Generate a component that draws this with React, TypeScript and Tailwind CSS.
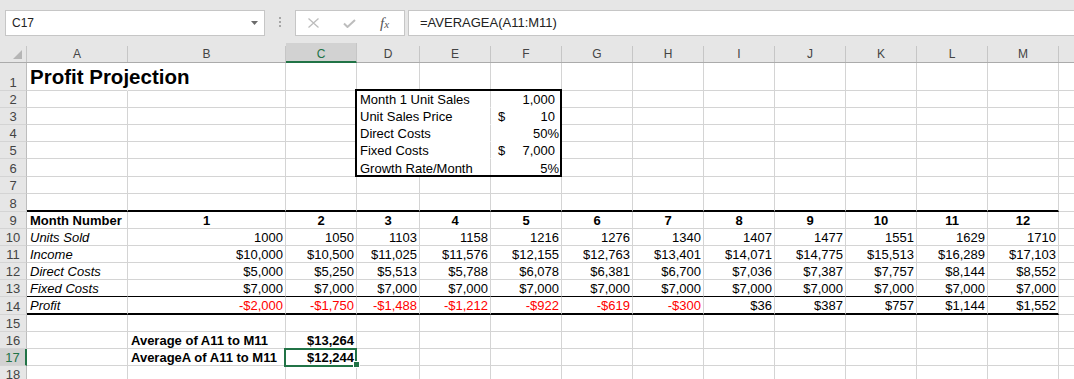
import React from "react";

type Bot = "n" | "w" | "k1" | "k2";
type Cell = {
  t?: React.ReactNode;
  a?: "l" | "r" | "c" | "rr" | "acc";
  s?: string;
  z?: string;
  bb?: Bot;
  br?: "n" | "w";
};
type Row = { n: number; h: string; cells: Cell[] };

const LETTERS = "ABCDEFGHIJKLMN".split("");
const WIDTHS = [
  "w-[101px]",
  "w-[158px]",
  "w-[71px]",
  "w-[63px]",
  "w-[71px]",
  "w-[71px]",
  "w-[71px]",
  "w-[71px]",
  "w-[71px]",
  "w-[71px]",
  "w-[71px]",
  "w-[71px]",
  "w-[71px]",
  "w-[71px]",
];

const BOT: Record<Bot, string> = {
  n: "border-b border-b-[#d4d4d4]",
  w: "border-b border-b-white",
  k1: "border-b border-b-black",
  k2: "border-b-2 border-b-black",
};
const RIGHT = {
  n: "border-r border-r-[#d4d4d4]",
  w: "border-r border-r-white",
};
const ALIGN = {
  l: "justify-start pl-[3px]",
  r: "justify-end pr-[2px]",
  c: "justify-center",
  rr: "justify-end pr-[6px]",
  acc: "justify-between pl-[7px] pr-[6px]",
};

const months = [1, 2, 3, 4, 5, 6, 7, 8, 9, 10, 11, 12];
const units = [1000, 1050, 1103, 1158, 1216, 1276, 1340, 1407, 1477, 1551, 1629, 1710];
const income = ["$10,000", "$10,500", "$11,025", "$11,576", "$12,155", "$12,763", "$13,401", "$14,071", "$14,775", "$15,513", "$16,289", "$17,103"];
const direct = ["$5,000", "$5,250", "$5,513", "$5,788", "$6,078", "$6,381", "$6,700", "$7,036", "$7,387", "$7,757", "$8,144", "$8,552"];
const fixed = months.map(() => "$7,000");
const profit = ["-$2,000", "-$1,750", "-$1,488", "-$1,212", "-$922", "-$619", "-$300", "$36", "$387", "$757", "$1,144", "$1,552"];

const blank = (): Cell[] => LETTERS.map(() => ({}));

function set(cells: Cell[], i: number, c: Cell) {
  cells[i] = { ...cells[i], ...c };
  return cells;
}

function span(cells: Cell[], from: number, to: number, c: Cell) {
  for (let i = from; i <= to; i++) set(cells, i, c);
  return cells;
}

function dataRow(label: string, vals: (string | number)[], extra: Cell = {}) {
  const cells = blank();
  set(cells, 0, { t: label, a: "l", s: "italic" });
  vals.forEach((v, i) => {
    const neg = typeof v === "string" && v.startsWith("-");
    set(cells, i + 1, { t: v, a: "r", s: neg ? "text-[#ff0000]" : "" });
  });
  if (extra.bb) span(cells, 0, 12, { bb: extra.bb });
  return cells;
}

const acc = (n: string) => (
  <>
    <span>$</span>
    <span>{n}</span>
  </>
);

function buildRows(): Row[] {
  const r1 = set(blank(), 0, {
    t: "Profit Projection",
    a: "l",
    z: "text-[20.5px] leading-[24px] pb-[1px]",
    s: "font-bold",
    br: "w",
  });

  const box = (label: string, val: Cell, last = false) => {
    const cells = blank();
    set(cells, 3, { t: label, a: "l", br: "w", bb: last ? "n" : "w" });
    set(cells, 4, { bb: last ? "n" : "w" });
    set(cells, 5, { ...val, bb: last ? "n" : "w" });
    return cells;
  };

  const r9 = blank();
  set(r9, 0, { t: "Month Number", a: "l", s: "font-bold" });
  months.forEach((m, i) => set(r9, i + 1, { t: m, a: "c", s: "font-bold" }));

  const r16 = blank();
  set(r16, 1, { t: "Average of A11 to M11", a: "l", s: "font-bold" });
  set(r16, 2, { t: "$13,264", a: "r", s: "font-bold" });

  const r17 = blank();
  set(r17, 1, { t: "AverageA of A11 to M11", a: "l", s: "font-bold" });
  set(r17, 2, { t: "$12,244", a: "r", s: "font-bold" });

  return [
    { n: 1, h: "h-[28px]", cells: r1 },
    { n: 2, h: "h-[17px]", cells: box("Month 1 Unit Sales", { t: "1,000", a: "rr" }) },
    { n: 3, h: "h-[17px]", cells: box("Unit Sales Price", { t: acc("10"), a: "acc" }) },
    { n: 4, h: "h-[17px]", cells: box("Direct Costs", { t: "50%", a: "r" }) },
    { n: 5, h: "h-[17px]", cells: box("Fixed Costs", { t: acc("7,000"), a: "acc" }) },
    { n: 6, h: "h-[18px]", cells: box("Growth Rate/Month", { t: "5%", a: "r" }, true) },
    { n: 7, h: "h-[17px]", cells: blank() },
    { n: 8, h: "h-[18px]", cells: span(blank(), 0, 12, { bb: "k2" }) },
    { n: 9, h: "h-[17px]", cells: r9 },
    { n: 10, h: "h-[17px]", cells: dataRow("Units Sold", units) },
    { n: 11, h: "h-[17px]", cells: dataRow("Income", income) },
    { n: 12, h: "h-[17px]", cells: dataRow("Direct Costs", direct) },
    { n: 13, h: "h-[17px]", cells: dataRow("Fixed Costs", fixed, { bb: "k1" }) },
    { n: 14, h: "h-[18px]", cells: dataRow("Profit", profit, { bb: "k2" }) },
    { n: 15, h: "h-[17px]", cells: blank() },
    { n: 16, h: "h-[17px]", cells: r16 },
    { n: 17, h: "h-[17px]", cells: r17 },
    { n: 18, h: "h-[17px]", cells: blank() },
  ];
}

function FormulaBar() {
  return (
    <div className="h-[43px] bg-[#e6e6e6] flex items-start pt-[10px] pl-[5px]">
      <div className="w-[260px] h-[26px] bg-white border border-[#c6c6c6] flex items-center justify-between pl-[6px] pr-[6px] text-[12px] text-[#222]">
        <span>C17</span>
        <svg width="7" height="4" viewBox="0 0 7 4">
          <polygon points="0,0 7,0 3.5,4" fill="#6b6b6b" />
        </svg>
      </div>
      <div className="ml-[14px] mt-[7px] flex flex-col gap-[2px]">
        <div className="w-[2px] h-[2px] bg-[#a6a6a6]" />
        <div className="w-[2px] h-[2px] bg-[#a6a6a6]" />
        <div className="w-[2px] h-[2px] bg-[#a6a6a6]" />
      </div>
      <div className="ml-[14px] w-[110px] h-[26px] bg-white border border-[#c6c6c6] flex items-center">
        <svg className="ml-[12px]" width="11" height="10" viewBox="0 0 11 10">
          <path d="M0.5 0.5 L10.5 9.5 M10.5 0.5 L0.5 9.5" stroke="#bdbdbd" strokeWidth="1.3" fill="none" />
        </svg>
        <svg className="ml-[24px]" width="13" height="9" viewBox="0 0 13 9">
          <polyline points="1,4.5 4.5,8 12,1" stroke="#bdbdbd" strokeWidth="2" fill="none" />
        </svg>
        <span className="ml-[24px] font-['Liberation_Serif'] italic text-[#555] text-[15px] leading-none">
          f<span className="text-[11px]">x</span>
        </span>
      </div>
      <div className="ml-[3px] flex-1 h-[26px] bg-white border border-[#c6c6c6] border-r-0 flex items-center pl-[11px] text-[13px] text-[#222]">
        =AVERAGEA(A11:M11)
      </div>
    </div>
  );
}

function ColumnHeader() {
  return (
    <div className="flex h-[20px] bg-[#e6e6e6] text-[12px] leading-[15px] text-[#444]">
      <div className="w-[27px] shrink-0 h-[20px] flex items-end border-b border-b-[#ababab]">
        <div className="h-[16px] w-full border-r border-r-[#c6c6c6] flex items-end justify-end pr-[4px] pb-[3px]">
          <svg width="9" height="9" viewBox="0 0 9 9">
            <polygon points="9,0 9,9 0,9" fill="#b5b5b5" />
          </svg>
        </div>
      </div>
      {LETTERS.map((l, i) =>
        l === "C" ? (
          <div
            key={l}
            className={`${WIDTHS[i]} shrink-0 h-[20px] bg-[#d2d2d2] border-b-2 border-b-[#217346] border-r border-r-[#c6c6c6] flex items-end justify-center text-[#217346]`}
          >
            <span className="relative top-[1px]">{l}</span>
          </div>
        ) : (
          <div key={l} className={`${WIDTHS[i]} shrink-0 h-[20px] flex items-end border-b border-b-[#ababab]`}>
            {/* N is mostly off-screen, its letter is not visible */}
            <div className="h-[16px] w-full border-r border-r-[#c6c6c6] flex items-end justify-center">
              {l === "N" ? "" : l}
            </div>
          </div>
        )
      )}
    </div>
  );
}

function SheetRow({ row }: { row: Row }) {
  const sel = row.n === 17;
  return (
    <div className={`flex ${row.h}`}>
      <div
        className={
          sel
            ? "w-[27px] shrink-0 bg-[#d2d2d2] border-r-2 border-r-[#217346] border-b border-b-[#d4d4d4] flex items-end justify-center text-[13px] leading-[15px] text-[#217346]"
            : "w-[27px] shrink-0 bg-[#e6e6e6] border-r border-r-[#bdbdbd] border-b border-b-[#d4d4d4] flex items-end justify-center text-[13px] leading-[15px] text-[#444]"
        }
      >
        {row.n}
      </div>
      {row.cells.map((c, i) => (
        <div
          key={i}
          className={`${WIDTHS[i]} shrink-0 flex items-end whitespace-nowrap ${c.z ?? "text-[13px] leading-[15px]"} ${BOT[c.bb ?? "n"]} ${RIGHT[c.br ?? "n"]} ${ALIGN[c.a ?? "l"]} ${c.s ?? ""}`}
        >
          {c.t}
        </div>
      ))}
    </div>
  );
}

export default function App() {
  const rows = buildRows();
  return (
    <div className="w-[1074px] h-[379px] overflow-hidden bg-white font-['Liberation_Sans',Arial,sans-serif] text-black">
      <FormulaBar />
      <ColumnHeader />
      <div className="relative">
        {rows.map((r) => (
          <SheetRow key={r.n} row={r} />
        ))}
        {/* input box D2:F6 */}
        <div className="absolute left-[355px] top-[26px] w-[207px] h-[88px] border-2 border-black pointer-events-none" />
        {/* active cell C17 */}
        <div className="absolute left-[284px] top-[285px] w-[73px] h-[19px] border-2 border-[#217346] pointer-events-none" />
        <div className="absolute left-[353px] top-[298px] w-[7px] h-[7px] bg-[#217346] border border-white" />
      </div>
    </div>
  );
}
